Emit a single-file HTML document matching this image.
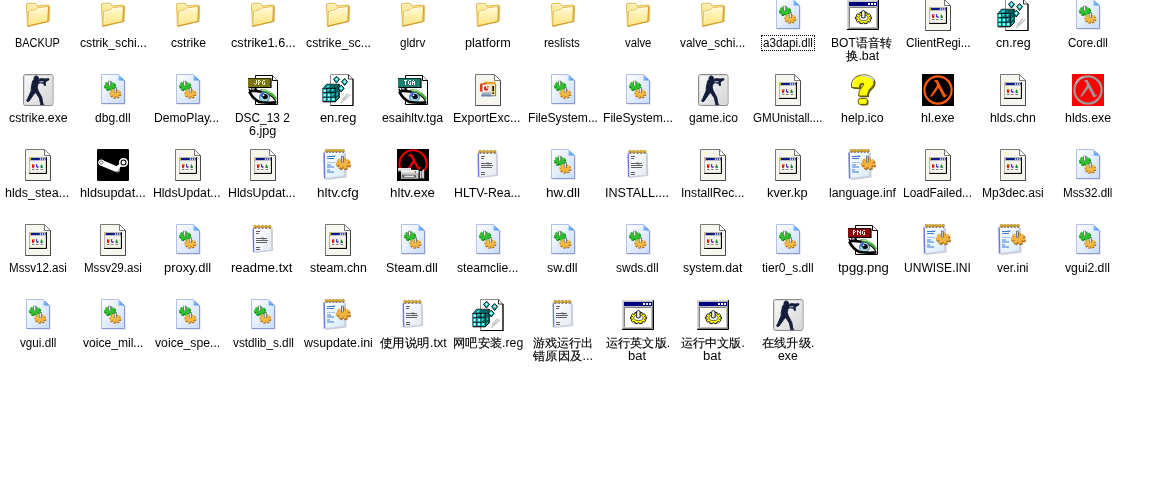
<!DOCTYPE html>
<html><head><meta charset="utf-8"><style>
html,body{margin:0;padding:0;background:#fff;width:1156px;height:488px;overflow:hidden;position:relative}
.i{position:absolute;width:32px;height:32px}
.t{position:absolute;transform-origin:0 0;font-family:"Liberation Sans",sans-serif;font-size:12px;line-height:13px;color:#000;white-space:nowrap;filter:grayscale(1) contrast(1.6)}
.cj{-webkit-text-stroke:.15px #000}
.f{position:absolute;border:1px dotted #000;box-sizing:border-box}
</style></head><body>
<svg width="0" height="0" style="position:absolute"><defs>
<linearGradient id="fg1" x1="0" y1="0" x2="0" y2="1"><stop offset="0" stop-color="#FFFAD8"/><stop offset="1" stop-color="#FFE47E"/></linearGradient>
<linearGradient id="dg1" x1="0" y1="0" x2="1" y2="1"><stop offset="0" stop-color="#FFFFFF"/><stop offset="1" stop-color="#C8DCFA"/></linearGradient>
<linearGradient id="dg2" x1="0" y1="0" x2="1" y2="1"><stop offset="0" stop-color="#A8D0FF"/><stop offset="1" stop-color="#3A8AEA"/></linearGradient>
<linearGradient id="csg" x1="0" y1="0" x2="1" y2="1"><stop offset="0" stop-color="#FAFAFA"/><stop offset="1" stop-color="#D4D4D4"/></linearGradient>
<linearGradient id="npg" x1="0" y1="0" x2="1" y2="1"><stop offset="0" stop-color="#FFFFFF"/><stop offset="1" stop-color="#D8ECFA"/></linearGradient>
<linearGradient id="npg2" x1="0" y1="0" x2="1" y2="1"><stop offset="0" stop-color="#FFFFFF"/><stop offset="1" stop-color="#E4EAF2"/></linearGradient>
</defs><symbol id="fo" viewBox="0 0 32 32">
<path d="M6.5,28 L5.5,6.5 Q5.5,5 7,5 L13.5,5 L16,7.5 L27.5,6.5 L28.5,8 L28,23 Z" fill="#8A8A8A" opacity=".22"/>
<path d="M5.5,27.5 L4.5,6 Q4.5,4.5 6,4.5 L12,4.2 Q13.5,4.2 14.5,6 L15,7 L26.5,6 L27.5,7.5 L27,22 Z" fill="#FCEBA0" stroke="#E0B440" stroke-width=".9"/>
<path d="M6,6 L12,5.6 L13.8,8" fill="none" stroke="#FFFBE8" stroke-width=".8"/>
<path d="M6.5,12.5 L13.5,10.8 L15.5,9 L26.5,7.5 L26,22.5 L6,27 Z" fill="url(#fg1)" stroke="#E2B040" stroke-width=".9"/>
<path d="M7.5,13.2 L13.8,11.6 L15.8,9.9 L25.5,8.6" fill="none" stroke="#FFFDF0" stroke-width=".9"/>
<path d="M7.4,13.5 L7.1,25.6" stroke="#FFFBE0" stroke-width=".8" opacity=".8"/>
<path d="M6,27 L26,22.5 L26.5,7.5" fill="none" stroke="#D09A28" stroke-width=".9"/>
</symbol>
<symbol id="dl" viewBox="0 0 32 32">
<path d="M5.5,1.5 H22.5 L28.5,7.5 V30.5 H5.5Z" fill="#7880A8" opacity=".35"/>
<path d="M4.5,0.5 H21.5 L27.5,6.5 V29.5 H4.5Z" fill="url(#dg1)" stroke="#B0C0EA"/>
<path d="M27.5,6.5 V29.5 H4.5" fill="none" stroke="#8C9AD0"/>
<path d="M21.5,0.5 V6.5 H27.5Z" fill="url(#dg2)"/>
<path d="M17.70,12.84 L19.67,13.29 L18.61,15.50 L16.73,14.83 L16.04,15.33 L16.80,16.84 L13.88,17.59 L13.34,16.00 L12.39,15.91 L11.37,17.34 L8.79,16.07 L10.00,14.76 L9.50,14.15 L7.47,14.43 L7.17,12.09 L9.22,12.05 L9.55,11.37 L8.04,10.28 L10.24,8.65 L11.59,9.90 L12.50,9.67 L12.64,8.04 L15.69,8.33 L15.32,9.94 L16.13,10.33 L17.81,9.38 L19.42,11.38 L17.60,12.13Z" fill="#0A7A0E"/>
<path d="M17.10,11.84 L19.07,12.27 L18.03,14.39 L16.15,13.70 L15.47,14.17 L16.25,15.67 L13.37,16.39 L12.84,14.80 L11.91,14.72 L10.91,16.16 L8.36,14.93 L9.58,13.64 L9.09,13.07 L7.07,13.36 L6.77,11.12 L8.82,11.09 L9.14,10.46 L7.62,9.39 L9.79,7.82 L11.13,9.08 L12.02,8.87 L12.15,7.23 L15.16,7.52 L14.77,9.11 L15.56,9.48 L17.24,8.52 L18.82,10.44 L17.01,11.17Z" fill="#30C030"/>
<path d="M22.58,19.91 L24.50,20.13 L23.99,22.06 L22.11,21.66 L21.66,22.16 L22.81,23.40 L20.67,24.49 L19.68,23.15 L18.89,23.27 L18.60,24.80 L16.08,24.41 L16.55,22.91 L15.89,22.57 L14.33,23.50 L12.90,21.86 L14.57,21.08 L14.42,20.49 L12.50,20.27 L13.01,18.34 L14.89,18.74 L15.34,18.24 L14.19,17.00 L16.33,15.91 L17.32,17.25 L18.11,17.13 L18.40,15.60 L20.92,15.99 L20.45,17.49 L21.11,17.83 L22.67,16.90 L24.10,18.54 L22.43,19.32Z" fill="#A86810"/>
<path d="M22.18,19.02 L24.10,19.23 L23.59,21.12 L21.71,20.71 L21.26,21.20 L22.41,22.43 L20.27,23.50 L19.28,22.15 L18.49,22.27 L18.20,23.80 L15.68,23.42 L16.15,21.92 L15.49,21.60 L13.93,22.53 L12.50,20.92 L14.17,20.15 L14.02,19.58 L12.10,19.37 L12.61,17.48 L14.49,17.89 L14.94,17.40 L13.79,16.17 L15.93,15.10 L16.92,16.45 L17.71,16.33 L18.00,14.80 L20.52,15.18 L20.05,16.68 L20.71,17.00 L22.27,16.07 L23.70,17.68 L22.03,18.45Z" fill="#F2B842"/>
<rect x="11.2" y="6.8" width="2.9" height="5" fill="#606060"/><rect x="11.9" y="7.2" width="1.4" height="4.4" fill="#F4F4F4"/>
<rect x="17" y="13.8" width="2.7" height="5" fill="#606060"/><rect x="17.6" y="14.2" width="1.3" height="4.4" fill="#F4F4F4"/>
</symbol>
<symbol id="bt" viewBox="0 0 32 32">
<rect x="0" y="1" width="32" height="29" fill="#C0C0C0"/>
<path d="M0.5,29.5 V1.5 H31" fill="none" stroke="#D8D8D8"/>
<path d="M31.5,1 V30.5 H0" fill="none" stroke="#000"/>
<path d="M30.5,2 V29.5 H1" fill="none" stroke="#808080"/>
<rect x="2" y="3" width="28" height="4" fill="#000080"/>
<rect x="21" y="4" width="2" height="2" fill="#fff"/><rect x="24" y="4" width="2" height="2" fill="#fff"/><rect x="27" y="4" width="2" height="2" fill="#fff"/>
<rect x="3" y="9" width="26" height="19" fill="#fff"/>
<path d="M2.5,28 V8.5 H29" fill="none" stroke="#808080"/>
<path d="M23.14,17.96 L24.60,18.08 L24.60,19.92 L23.14,20.04 L22.74,20.90 L23.81,21.68 L22.30,23.17 L21.00,22.59 L19.96,23.11 L20.22,24.26 L17.78,24.83 L17.14,23.76 L15.86,23.76 L15.22,24.83 L12.78,24.26 L13.04,23.11 L12.00,22.59 L10.70,23.17 L9.19,21.68 L10.26,20.90 L9.86,20.04 L8.40,19.92 L8.40,18.08 L9.86,17.96 L10.26,17.10 L9.19,16.32 L10.70,14.83 L12.00,15.41 L13.04,14.89 L12.78,13.74 L15.22,13.17 L15.86,14.24 L17.14,14.24 L17.78,13.17 L20.22,13.74 L19.96,14.89 L21.00,15.41 L22.30,14.83 L23.81,16.32 L22.74,17.10Z" fill="#FFFF00" stroke="#000" stroke-width=".9"/>
<ellipse cx="16.5" cy="18.8" rx="4.6" ry="2.7" fill="#fff" stroke="#000" stroke-width=".6"/>
<path d="M14.6,18.5 V12.5 Q16.4,10.6 18.2,12.5 V18.5 Q16.4,19.6 14.6,18.5Z" fill="#C8C8C8" stroke="#000" stroke-width=".8"/>
<rect x="15.6" y="12.5" width="1.3" height="5.5" fill="#fff"/>
</symbol>
<symbol id="ap" viewBox="0 0 32 32">
<path d="M3.5,0.5 H22.5 L28.5,6.5 V31.5 H3.5Z" fill="#F6F6EE" stroke="#787878"/>
<path d="M28.5,6.5 V31.5 H3.5" fill="none" stroke="#4A4A4A"/>
<path d="M22.5,0.5 V6.5 H28.5Z" fill="#FFFFFF" stroke="#787878"/>
<rect x="7.5" y="8.5" width="16.5" height="15.5" fill="#ECEADC" stroke="#B8B8B0"/>
<rect x="8.6" y="12" width="14.6" height="11.2" fill="#F4F4EA"/>
<path d="M24.5,8.2 V24.5 H7.2" fill="none" stroke="#000" stroke-width="1"/>
<rect x="8" y="9" width="16" height="2.2" fill="#0A1A8A"/>
<rect x="8" y="9" width="1" height="2.2" fill="#F0A000"/>
<circle cx="18.5" cy="10" r=".85" fill="#fff"/><circle cx="20.6" cy="10" r=".85" fill="#fff"/><circle cx="22.7" cy="10" r=".85" fill="#fff"/>
<path d="M10,16 Q11,14.5 12.5,15.5 L12.2,18 L11,19.5 L10,18Z" fill="#E00000"/><rect x="11" y="15.5" width="1" height="1" fill="#FFD000"/>
<path d="M14,15 L15.5,15.5 L14.8,17 L16.5,17.5 L16,19 L14,18Z" fill="#1040F0"/><rect x="15" y="17.5" width="1.5" height="1" fill="#C000C0"/>
<path d="M18.5,19 L18.5,17 L19.5,15 L20.5,17 L21,19Z" fill="#10A010"/><rect x="19" y="17.5" width="1.2" height="1" fill="#2050F0"/>
<rect x="10" y="20" width="2.5" height="1" fill="#808080"/><rect x="14" y="20" width="2.5" height="1" fill="#808080"/><rect x="18.5" y="20" width="2.5" height="1" fill="#808080"/>
</symbol>
<symbol id="rg" viewBox="0 0 32 32">
<path d="M8.5,0.5 H26.5 L31,5 V31.5 H8.5Z" fill="#fff" stroke="#909090"/>
<path d="M31,5 V31.5 H8.5" fill="none" stroke="#000" stroke-width="1.2"/>
<path d="M26.5,0.5 V5 H31" fill="none" stroke="#000" stroke-width=".8"/>
<path d="M20,26 L26,19.5 M22.5,26 L28,20.5 M19,29 L24,24" stroke="#C4C4C4" stroke-width="1.3"/>
<path d="M0.8,14.6 L4.6,10.2 L17.4,10.2 L13.2,14.6Z" fill="#00A8A8" stroke="#000" stroke-width=".7"/>
<path d="M13.2,14.6 L17.4,10.2 L17.4,23.2 L13.2,27.6Z" fill="#006464" stroke="#000" stroke-width=".7"/>
<path d="M5.2,11 L8.6,11 L7,13.8 L3.6,13.8Z" fill="#30E8E8" stroke="#000" stroke-width=".4"/>
<path d="M9.4,11 L12.6,11 L11,13.8 L7.8,13.8Z M13.4,11 L16.6,11 L14.6,13.8 L11.8,13.8Z" fill="#008080" stroke="#000" stroke-width=".4"/>
<path d="M14,24 L16.6,21.2 L16.6,24.6 L14,27Z M14,19.5 L16.6,16.7 L16.6,20.4 L14,23Z" fill="#10B8B8" stroke="#000" stroke-width=".4"/>
<rect x="0.80" y="14.60" width="4.13" height="4.13" fill="#00DCDC" stroke="#000" stroke-width=".55"/><circle cx="2.87" cy="16.66" r="1" fill="#E8FFFF"/><rect x="0.80" y="18.93" width="4.13" height="4.13" fill="#00DCDC" stroke="#000" stroke-width=".55"/><circle cx="2.87" cy="21.00" r="1" fill="#E8FFFF"/><rect x="0.80" y="23.26" width="4.13" height="4.13" fill="#00DCDC" stroke="#000" stroke-width=".55"/><circle cx="2.87" cy="25.32" r="1" fill="#E8FFFF"/><rect x="4.93" y="14.60" width="4.13" height="4.33" fill="#006C6C" stroke="#000" stroke-width=".55"/><path d="M5.43,15.10 h3 l-3,3z" fill="#30E0E0"/><rect x="4.93" y="18.93" width="4.13" height="4.13" fill="#00DCDC" stroke="#000" stroke-width=".55"/><circle cx="6.99" cy="21.00" r="1" fill="#E8FFFF"/><rect x="4.93" y="23.26" width="4.13" height="4.13" fill="#00DCDC" stroke="#000" stroke-width=".55"/><circle cx="6.99" cy="25.32" r="1" fill="#E8FFFF"/><rect x="9.06" y="14.60" width="4.13" height="4.33" fill="#006C6C" stroke="#000" stroke-width=".55"/><path d="M9.56,15.10 h3 l-3,3z" fill="#30E0E0"/><rect x="9.06" y="18.93" width="4.13" height="4.33" fill="#006C6C" stroke="#000" stroke-width=".55"/><path d="M9.56,19.43 h3 l-3,3z" fill="#30E0E0"/><rect x="9.06" y="23.26" width="4.13" height="4.13" fill="#00DCDC" stroke="#000" stroke-width=".55"/><circle cx="11.12" cy="25.32" r="1" fill="#E8FFFF"/><path d="M0.8,27.8 H13.2 L17.4,23.4" stroke="#000" stroke-width="1" fill="none"/><path d="M14.5,2.3 L17.5,5.3 L14.5,9.1 L11.5,5.3Z" fill="#007C7C" stroke="#000" stroke-width=".9"/><path d="M14.5,2.9 L16.7,5.3 L14.5,7.9 L12.3,5.3Z" fill="#10D8D8"/><circle cx="14.5" cy="5.3" r="1" fill="#fff"/><path d="M22.6,4.6 L25.6,7.6 L22.6,11.4 L19.6,7.6Z" fill="#007C7C" stroke="#000" stroke-width=".9"/><path d="M22.6,5.2 L24.8,7.6 L22.6,10.2 L20.4,7.6Z" fill="#10D8D8"/><circle cx="22.6" cy="7.6" r="1" fill="#fff"/><path d="M19.2,11.2 L22.2,14.2 L19.2,18.0 L16.2,14.2Z" fill="#007C7C" stroke="#000" stroke-width=".9"/><path d="M19.2,11.8 L21.4,14.2 L19.2,16.8 L17.0,14.2Z" fill="#10D8D8"/><circle cx="19.2" cy="14.2" r="1" fill="#fff"/></symbol>
<symbol id="cs" viewBox="0 0 32 32">
<rect x="1.5" y="0.5" width="29.5" height="31" rx="2" fill="url(#csg)" stroke="#8C8C8C"/>
<rect x="2.5" y="1.5" width="27.5" height="29" rx="1.5" fill="none" stroke="#DCDCDC"/>
<path d="M12.2,5.8 C11,6 10.4,7 10.4,8 L9.2,13.8 L9.2,16.8 L5.8,24.5 L4.6,26.6 L5.2,27.6 L6.8,27.4 L11.6,20.6 L13.8,18.6 L17.4,24.2 L18.6,29.6 L18.4,30.6 L21.8,30.6 L20.8,29.2 L19.8,23.4 L16.2,16.6 L15.2,13.2 L16.2,9.6 L18.2,8.8 L21.6,9.4 L22.4,11.6 L23.6,11.4 L23.2,9 L24,7.4 L26.9,5.9 L27,4.7 L22.6,4.9 L19.6,4.5 L16.6,5.4 C16.8,3.6 16,1.9 14.2,1.9 C12.4,1.9 11.6,3.8 12.2,5.8Z" fill="#131C3A" stroke="#131C3A" stroke-width=".9" stroke-linejoin="round"/>
<path d="M17.2,7.4 L21.4,7.2 L21.6,8.2 L17.6,8.3Z" fill="#E8E8E8"/>
</symbol>
<symbol id="jp" viewBox="0 0 32 32">
<path d="M8.5,1.5 H25.5 L30.5,6.5 V30.5 H8.5Z" fill="#fff" stroke="#000"/>
<path d="M25.5,1.5 V6.5 H30.5" fill="#fff" stroke="#000"/>
<rect x="1" y="4" width="23" height="9.5" fill="#7A7410"/>
<path d="M1.5,13.5 H24 V4.5" stroke="#000" stroke-width="1.2" fill="none"/>
<path d="M1,4.5 H24" stroke="#000" stroke-width=".6"/>
<path d="M9,6h1v1h-1zM9,7h1v1h-1zM9,8h1v1h-1zM7,9h1v1h-1zM9,9h1v1h-1zM8,10h1v1h-1zM11,6h1v1h-1zM12,6h1v1h-1zM11,7h1v1h-1zM13,7h1v1h-1zM11,8h1v1h-1zM12,8h1v1h-1zM11,9h1v1h-1zM11,10h1v1h-1zM16,6h1v1h-1zM17,6h1v1h-1zM15,7h1v1h-1zM15,8h1v1h-1zM17,8h1v1h-1zM15,9h1v1h-1zM17,9h1v1h-1zM16,10h1v1h-1zM17,10h1v1h-1z" fill="#F0ECC0"/>
<path d="M2.5,17.5 Q9,17 14,17.4 Q23,19 28.8,27.2 Q20,28.4 12.5,27.6 Q6,24.5 2.5,17.5Z" fill="#F4F4F4"/>
<path d="M13.6,16.4 Q23,15.8 29,25.6" fill="none" stroke="#48B038" stroke-width="2.8"/>
<path d="M14,16 Q20,15.6 24,18.6" fill="none" stroke="#C8ECC0" stroke-width="1"/>
<path d="M14,17.8 Q23,18.8 28.6,27" fill="none" stroke="#000" stroke-width="1.1"/>
<circle cx="17.5" cy="23.2" r="5" fill="#9ADCF0" stroke="#000" stroke-width=".5"/>
<path d="M12.6,22.6 A5,5 0 0 1 17,18.2 L17.5,23.2Z" fill="#3A70E0"/>
<circle cx="18.1" cy="22.6" r="2.7" fill="#000"/>
<circle cx="16.6" cy="21.3" r=".9" fill="#fff"/>
<path d="M2,17.2 Q8,16.6 14.4,17.8" fill="none" stroke="#000" stroke-width="2.4"/>
<path d="M2.8,16.4 L1.8,14.6 M5,16.2 L4.6,14.2 M7.2,16 L7.2,14.2 M9.4,16 L9.8,14.4" stroke="#000" stroke-width="1.2"/>
<path d="M2.2,17.6 Q6,25 12.4,28 Q20,29.2 29.4,28.4" fill="none" stroke="#000" stroke-width="2.6"/>
</symbol>
<symbol id="tg" viewBox="0 0 32 32">
<path d="M8.5,1.5 H25.5 L30.5,6.5 V30.5 H8.5Z" fill="#fff" stroke="#000"/>
<path d="M25.5,1.5 V6.5 H30.5" fill="#fff" stroke="#000"/>
<rect x="1" y="4" width="23" height="9.5" fill="#1A8070"/>
<path d="M1.5,13.5 H24 V4.5" stroke="#000" stroke-width="1.2" fill="none"/>
<path d="M1,4.5 H24" stroke="#000" stroke-width=".6"/>
<path d="M7,6h1v1h-1zM8,6h1v1h-1zM9,6h1v1h-1zM8,7h1v1h-1zM8,8h1v1h-1zM8,9h1v1h-1zM8,10h1v1h-1zM12,6h1v1h-1zM13,6h1v1h-1zM11,7h1v1h-1zM11,8h1v1h-1zM13,8h1v1h-1zM11,9h1v1h-1zM13,9h1v1h-1zM12,10h1v1h-1zM13,10h1v1h-1zM16,6h1v1h-1zM15,7h1v1h-1zM17,7h1v1h-1zM15,8h1v1h-1zM16,8h1v1h-1zM17,8h1v1h-1zM15,9h1v1h-1zM17,9h1v1h-1zM15,10h1v1h-1zM17,10h1v1h-1z" fill="#F0FFF8"/>
<path d="M2.5,17.5 Q9,17 14,17.4 Q23,19 28.8,27.2 Q20,28.4 12.5,27.6 Q6,24.5 2.5,17.5Z" fill="#F4F4F4"/>
<path d="M13.6,16.4 Q23,15.8 29,25.6" fill="none" stroke="#48B038" stroke-width="2.8"/>
<path d="M14,16 Q20,15.6 24,18.6" fill="none" stroke="#C8ECC0" stroke-width="1"/>
<path d="M14,17.8 Q23,18.8 28.6,27" fill="none" stroke="#000" stroke-width="1.1"/>
<circle cx="17.5" cy="23.2" r="5" fill="#9ADCF0" stroke="#000" stroke-width=".5"/>
<path d="M12.6,22.6 A5,5 0 0 1 17,18.2 L17.5,23.2Z" fill="#3A70E0"/>
<circle cx="18.1" cy="22.6" r="2.7" fill="#000"/>
<circle cx="16.6" cy="21.3" r=".9" fill="#fff"/>
<path d="M2,17.2 Q8,16.6 14.4,17.8" fill="none" stroke="#000" stroke-width="2.4"/>
<path d="M2.8,16.4 L1.8,14.6 M5,16.2 L4.6,14.2 M7.2,16 L7.2,14.2 M9.4,16 L9.8,14.4" stroke="#000" stroke-width="1.2"/>
<path d="M2.2,17.6 Q6,25 12.4,28 Q20,29.2 29.4,28.4" fill="none" stroke="#000" stroke-width="2.6"/>
</symbol>
<symbol id="pn" viewBox="0 0 32 32">
<path d="M8.5,1.5 H25.5 L30.5,6.5 V30.5 H8.5Z" fill="#fff" stroke="#000"/>
<path d="M25.5,1.5 V6.5 H30.5" fill="#fff" stroke="#000"/>
<rect x="1" y="4" width="23" height="9.5" fill="#8A0A0A"/>
<path d="M1.5,13.5 H24 V4.5" stroke="#000" stroke-width="1.2" fill="none"/>
<path d="M1,4.5 H24" stroke="#000" stroke-width=".6"/>
<path d="M6,6h1v1h-1zM7,6h1v1h-1zM6,7h1v1h-1zM8,7h1v1h-1zM6,8h1v1h-1zM7,8h1v1h-1zM6,9h1v1h-1zM6,10h1v1h-1zM10,6h1v1h-1zM13,6h1v1h-1zM10,7h1v1h-1zM11,7h1v1h-1zM13,7h1v1h-1zM10,8h1v1h-1zM12,8h1v1h-1zM13,8h1v1h-1zM10,9h1v1h-1zM13,9h1v1h-1zM10,10h1v1h-1zM13,10h1v1h-1zM16,6h1v1h-1zM17,6h1v1h-1zM15,7h1v1h-1zM15,8h1v1h-1zM17,8h1v1h-1zM15,9h1v1h-1zM17,9h1v1h-1zM16,10h1v1h-1zM17,10h1v1h-1z" fill="#FFE8E8"/>
<path d="M2.5,17.5 Q9,17 14,17.4 Q23,19 28.8,27.2 Q20,28.4 12.5,27.6 Q6,24.5 2.5,17.5Z" fill="#F4F4F4"/>
<path d="M13.6,16.4 Q23,15.8 29,25.6" fill="none" stroke="#48B038" stroke-width="2.8"/>
<path d="M14,16 Q20,15.6 24,18.6" fill="none" stroke="#C8ECC0" stroke-width="1"/>
<path d="M14,17.8 Q23,18.8 28.6,27" fill="none" stroke="#000" stroke-width="1.1"/>
<circle cx="17.5" cy="23.2" r="5" fill="#9ADCF0" stroke="#000" stroke-width=".5"/>
<path d="M12.6,22.6 A5,5 0 0 1 17,18.2 L17.5,23.2Z" fill="#3A70E0"/>
<circle cx="18.1" cy="22.6" r="2.7" fill="#000"/>
<circle cx="16.6" cy="21.3" r=".9" fill="#fff"/>
<path d="M2,17.2 Q8,16.6 14.4,17.8" fill="none" stroke="#000" stroke-width="2.4"/>
<path d="M2.8,16.4 L1.8,14.6 M5,16.2 L4.6,14.2 M7.2,16 L7.2,14.2 M9.4,16 L9.8,14.4" stroke="#000" stroke-width="1.2"/>
<path d="M2.2,17.6 Q6,25 12.4,28 Q20,29.2 29.4,28.4" fill="none" stroke="#000" stroke-width="2.6"/>
</symbol>
<symbol id="pp" viewBox="0 0 32 32">
<path d="M3.5,0.5 H22.5 L28.5,6.5 V31.5 H3.5Z" fill="#F6F6EE" stroke="#787878"/>
<path d="M28.5,6.5 V31.5 H3.5" fill="none" stroke="#4A4A4A"/>
<path d="M22.5,0.5 V6.5 H28.5Z" fill="#FFFFFF" stroke="#787878"/>
<path d="M9,21.8 L10.5,18.6 H19.5 V22.6 H9Z" fill="#6E88AC"/>
<path d="M10.5,19.4 H19 V20.2 H10.2Z" fill="#D4E0EC"/>
<rect x="12" y="7.8" width="11.6" height="2.2" fill="#F09A28"/>
<rect x="18.8" y="9.8" width="4.8" height="12" fill="#F2D890"/>
<path d="M23.6,9.8 V21.8 H18.8" fill="none" stroke="#4A6A9A" stroke-width=".8"/>
<rect x="20.4" y="12" width="1.5" height="5.2" fill="#000"/><rect x="20.4" y="18.4" width="1.5" height="1.5" fill="#000"/>
<rect x="8" y="9.2" width="6.5" height="8.6" rx="1.6" fill="#E03C1C"/>
<rect x="10.6" y="10.8" width="7.2" height="7.2" fill="#FFFFFF" stroke="#F0B8B0" stroke-width=".5"/>
<path d="M14.2,14.4 V12.1 A2.3,2.3 0 1 0 16.5,14.4Z" fill="#D82818"/>
<path d="M15,13.6 V11.6 A2.2,2.2 0 0 1 17.2,13.6Z" fill="#E86040"/>
</symbol>
<symbol id="hp" viewBox="0 0 32 32">
<path d="M4.5,13.5 Q4,6 9,3 Q13,0.5 18,0.8 Q25,1.5 27,6 Q28,11 23.5,14.5 Q20.5,17 20.5,22 L11.5,22 Q11.5,16 15,13 Q17.5,11 16.5,9.5 Q14,9 13,10.5 L12.5,14 Z" fill="#6E6400" transform="translate(1.4,1.2)"/>
<path d="M4.5,13.5 Q4,6 9,3 Q13,0.5 18,0.8 Q25,1.5 27,6 Q28,11 23.5,14.5 Q20.5,17 20.5,22 L11.5,22 Q11.5,16 15,13 Q17.5,11 16.5,9.5 Q14,9 13,10.5 L12.5,14 Z" fill="#FFFF00" stroke="#4A4400" stroke-width=".9"/>
<path d="M14,2.2 Q20,1 24,3.5 Q26,5 26.2,7" stroke="#D4D4D4" stroke-width="1.8" fill="none"/>
<path d="M5.5,12.5 Q5.5,6.5 9,4" stroke="#FFFFC8" stroke-width="1" fill="none"/>
<rect x="12.5" y="25.5" width="9" height="6" rx="2" fill="#6E6400"/>
<rect x="11.3" y="24.4" width="9" height="6" rx="2" fill="#FFFF00" stroke="#4A4400" stroke-width=".9"/>
</symbol>
<symbol id="hl" viewBox="0 0 32 32">
<rect width="32" height="32" fill="#000"/>
<circle cx="16" cy="16" r="13.6" fill="none" stroke="#FF5A0A" stroke-width="2.2"/>
<path d="M12.5,6 H15.5 L23.5,21 L25,20.5 L24.5,22 L22.5,23.5 L21,22.5 L16.5,14 L10,22.5 L8,22.5 L15,11.5 L14,8 L12.5,8Z" fill="#FF5A0A"/>
</symbol>
<symbol id="hd" viewBox="0 0 32 32">
<rect width="32" height="32" fill="#FF0000"/>
<circle cx="16" cy="16" r="13.6" fill="none" stroke="#9A9A9A" stroke-width="2.2"/>
<path d="M12.5,6 H15.5 L23.5,21 L25,20.5 L24.5,22 L22.5,23.5 L21,22.5 L16.5,14 L10,22.5 L8,22.5 L15,11.5 L14,8 L12.5,8Z" fill="#9A9A9A"/>
<path d="M3.5,9 Q6,4 11,2.5" stroke="#E0E0E0" stroke-width="1" fill="none"/>
</symbol>
<symbol id="st" viewBox="0 0 32 32">
<rect width="32" height="32" rx="1.2" fill="#000"/>
<path d="M4.5,10.8 L20.6,17.4 L19.6,23.2 L3.4,16.4 Z" fill="#fff"/>
<circle cx="4.3" cy="13.6" r="3.1" fill="#fff"/>
<circle cx="4.3" cy="13.6" r="1.7" fill="none" stroke="#000" stroke-width=".5"/>
<circle cx="20.2" cy="20.4" r="2.8" fill="#fff"/>
<path d="M18.3,22.2 A1.9,1.9 0 0 0 21.6,19" fill="none" stroke="#000" stroke-width=".6"/>
<path d="M19.5,19.2 L25,14.8" stroke="#fff" stroke-width="3.2"/>
<circle cx="26.5" cy="13.5" r="3.8" fill="#000" stroke="#fff" stroke-width="1.6"/>
<circle cx="26.5" cy="13.5" r="1.9" fill="#fff"/>
</symbol>
<symbol id="cf" viewBox="0 0 32 32">
<path d="M4,31 L24.5,28.5 L24,4 L3.5,5 Z" fill="#505878" opacity=".3"/>
<path d="M2.5,29.5 L22.5,27 L22,2.5 L2,3.5 Z" fill="url(#npg)" stroke="#C8D0E8" stroke-width=".7"/>
<path d="M2.6,29.5 L2.1,3.5" stroke="#7078D8" stroke-width="1.5"/>
<path d="M5,7.5 H9 M9,7.5 H13" stroke="#3A7AD8" stroke-width="1"/><path d="M10,6.5 H14" stroke="#A8C8F0" stroke-width=".8"/>
<path d="M5,9.5 H12" stroke="#3A7AD8" stroke-width="1"/>
<path d="M5,13.5 H13" stroke="#A8C8F0" stroke-width="1"/>
<path d="M5,16 H9 M5,18 H12" stroke="#3A7AD8" stroke-width="1"/>
<path d="M5,21 H8 M5,23 H12" stroke="#3A7AD8" stroke-width="1"/>
<ellipse cx="4.5" cy="1.8" rx="1.5" ry="1.6" fill="#E8B020" stroke="#8A6A10" stroke-width=".5"/><rect x="4.3" y="2.4" width=".9" height="1.6" fill="#6060A0"/><ellipse cx="7.8" cy="1.8" rx="1.5" ry="1.6" fill="#E8B020" stroke="#8A6A10" stroke-width=".5"/><rect x="7.6" y="2.4" width=".9" height="1.6" fill="#6060A0"/><ellipse cx="11.1" cy="1.8" rx="1.5" ry="1.6" fill="#E8B020" stroke="#8A6A10" stroke-width=".5"/><rect x="10.9" y="2.4" width=".9" height="1.6" fill="#6060A0"/><ellipse cx="14.4" cy="1.8" rx="1.5" ry="1.6" fill="#E8B020" stroke="#8A6A10" stroke-width=".5"/><rect x="14.2" y="2.4" width=".9" height="1.6" fill="#6060A0"/><ellipse cx="17.7" cy="1.8" rx="1.5" ry="1.6" fill="#E8B020" stroke="#8A6A10" stroke-width=".5"/><rect x="17.5" y="2.4" width=".9" height="1.6" fill="#6060A0"/><ellipse cx="21.0" cy="1.8" rx="1.5" ry="1.6" fill="#E8B020" stroke="#8A6A10" stroke-width=".5"/><rect x="20.8" y="2.4" width=".9" height="1.6" fill="#6060A0"/>
<path d="M26.80,15.46 L29.19,15.91 L28.12,18.62 L25.82,17.91 L25.06,18.54 L26.10,20.32 L22.73,21.35 L21.98,19.48 L20.87,19.41 L19.77,21.18 L16.64,19.76 L18.01,18.13 L17.38,17.41 L14.97,17.84 L14.44,15.03 L16.89,14.88 L17.22,14.05 L15.31,12.81 L17.77,10.73 L19.47,12.17 L20.51,11.85 L20.54,9.88 L24.14,10.10 L23.80,12.04 L24.77,12.48 L26.71,11.26 L28.75,13.61 L26.63,14.60Z" fill="#8A5008" opacity=".9"/>
<path d="M26.00,14.27 L28.39,14.70 L27.35,17.31 L25.06,16.59 L24.33,17.19 L25.38,18.96 L22.11,19.96 L21.38,18.08 L20.30,18.02 L19.23,19.79 L16.18,18.42 L17.56,16.80 L16.95,16.12 L14.56,16.56 L14.03,13.85 L16.48,13.71 L16.80,12.93 L14.89,11.71 L17.28,9.70 L18.96,11.15 L19.96,10.84 L19.97,8.88 L23.48,9.09 L23.12,11.03 L24.05,11.44 L25.98,10.21 L27.96,12.48 L25.84,13.45Z" fill="#F2B440"/>
<path d="M26.00,14.27 L28.39,14.70 L27.35,17.31 L25.06,16.59 L24.33,17.19 L25.38,18.96 L22.11,19.96 L21.38,18.08 L20.30,18.02 L19.23,19.79 L16.18,18.42 L17.56,16.80 L16.95,16.12 L14.56,16.56 L14.03,13.85 L16.48,13.71 L16.80,12.93 L14.89,11.71 L17.28,9.70 L18.96,11.15 L19.96,10.84 L19.97,8.88 L23.48,9.09 L23.12,11.03 L24.05,11.44 L25.98,10.21 L27.96,12.48 L25.84,13.45Z" fill="none" stroke="#D89020" stroke-width=".5"/>
<rect x="19" y="6.8" width="2.6" height="6.5" fill="#404858"/><rect x="19.7" y="7.2" width="1.1" height="5.8" fill="#E0E4F0"/>
</symbol>
<symbol id="tx" viewBox="0 0 32 32">
<path d="M7.6,29 L26.2,27 L25.8,4.5 L7.2,5.2 Z" fill="#505878" opacity=".3"/>
<path d="M6.5,28 L24.6,26 L24.2,3.2 L6.2,4.2 Z" fill="url(#npg2)" stroke="#C8CCE0" stroke-width=".7"/>
<path d="M6.6,28 L6.3,4.2" stroke="#7078D8" stroke-width="1.4"/>
<path d="M9,7.5 H13 M9,9.5 H12 M9,14.5 H20 M9,16.5 H21 M9,18.5 H20 M9,23.5 H13 M9,25.5 H13" stroke="#606060" stroke-width="1"/>
<path d="M14,13.5 H17 M15,15.5 H18" stroke="#B0B0B0" stroke-width=".8"/>
<ellipse cx="8.2" cy="2.8" rx="1.5" ry="1.6" fill="#E8B020" stroke="#8A6A10" stroke-width=".5"/><rect x="8.0" y="3.4" width=".9" height="1.6" fill="#6060A0"/><ellipse cx="11.8" cy="2.8" rx="1.5" ry="1.6" fill="#E8B020" stroke="#8A6A10" stroke-width=".5"/><rect x="11.6" y="3.4" width=".9" height="1.6" fill="#6060A0"/><ellipse cx="15.4" cy="2.8" rx="1.5" ry="1.6" fill="#E8B020" stroke="#8A6A10" stroke-width=".5"/><rect x="15.2" y="3.4" width=".9" height="1.6" fill="#6060A0"/><ellipse cx="19.0" cy="2.8" rx="1.5" ry="1.6" fill="#E8B020" stroke="#8A6A10" stroke-width=".5"/><rect x="18.8" y="3.4" width=".9" height="1.6" fill="#6060A0"/><ellipse cx="22.6" cy="2.8" rx="1.5" ry="1.6" fill="#E8B020" stroke="#8A6A10" stroke-width=".5"/><rect x="22.4" y="3.4" width=".9" height="1.6" fill="#6060A0"/></symbol>
<symbol id="tv" viewBox="0 0 32 32">
<rect width="32" height="32" fill="#000"/>
<path d="M3.4,19.9 A13.6,13.6 0 1 1 27.8,21.6" fill="none" stroke="#F00000" stroke-width="2.1"/>
<path d="M11.6,6.4 H14.4 L21.2,19.2 H23.6" fill="none" stroke="#F00000" stroke-width="2.3"/><path d="M17,11.6 L11.8,19.6" fill="none" stroke="#F00000" stroke-width="2.2"/>
<rect x="1" y="19" width="13" height="3.2" fill="#E4E4E4"/>
<rect x="1" y="21.6" width="13" height=".8" fill="#707070"/>
<rect x="4" y="20.8" width="17.5" height="9" fill="#C4C4C4"/>
<rect x="4" y="21.2" width="17.5" height="2.4" fill="#F2F2F2"/>
<rect x="5.6" y="26.2" width="13" height="2" fill="#fff" stroke="#303030" stroke-width=".6"/>
<rect x="6.2" y="26.6" width="1" height="1.2" fill="#000"/><rect x="17.2" y="26.6" width="1" height="1.2" fill="#000"/>
<rect x="22.8" y="22" width="1.8" height="7.5" fill="#D8D8D8"/>
<path d="M25,21.8 L27.2,19.8 V30.2 L25,28.4Z" fill="#D0D0D0"/>
<rect x="17.8" y="22.2" width="1" height="1.6" fill="#F00000"/>
</symbol>
</svg>

<svg class="i" style="left:22px;top:-1px"><use href="#fo"/></svg>
<div class="t" style="left:14.69px;top:37px;transform:scaleX(0.9083)">BACKUP</div>
<svg class="i" style="left:97px;top:-1px"><use href="#fo"/></svg>
<div class="t" style="left:79.80px;top:37px;transform:scaleX(1.0123)">cstrik_schi...</div>
<svg class="i" style="left:172px;top:-1px"><use href="#fo"/></svg>
<div class="t" style="left:170.70px;top:37px;transform:scaleX(1.0088)">cstrike</div>
<svg class="i" style="left:247px;top:-1px"><use href="#fo"/></svg>
<div class="t" style="left:230.80px;top:37px;transform:scaleX(1.0550)">cstrike1.6...</div>
<svg class="i" style="left:322px;top:-1px"><use href="#fo"/></svg>
<div class="t" style="left:305.80px;top:37px;transform:scaleX(1.0258)">cstrike_sc...</div>
<svg class="i" style="left:397px;top:-1px"><use href="#fo"/></svg>
<div class="t" style="left:399.60px;top:37px;transform:scaleX(0.9731)">gldrv</div>
<svg class="i" style="left:472px;top:-1px"><use href="#fo"/></svg>
<div class="t" style="left:464.55px;top:37px;transform:scaleX(1.0548)">platform</div>
<svg class="i" style="left:547px;top:-1px"><use href="#fo"/></svg>
<div class="t" style="left:544.44px;top:37px;transform:scaleX(0.9611)">reslists</div>
<svg class="i" style="left:622px;top:-1px"><use href="#fo"/></svg>
<div class="t" style="left:624.60px;top:37px;transform:scaleX(0.9393)">valve</div>
<svg class="i" style="left:697px;top:-1px"><use href="#fo"/></svg>
<div class="t" style="left:679.90px;top:37px;transform:scaleX(0.9877)">valve_schi...</div>
<svg class="i" style="left:772px;top:-1px"><use href="#dl"/></svg>
<div class="t" style="left:762.60px;top:37px;transform:scaleX(0.9725)">a3dapi.dll</div>
<svg class="i" style="left:847px;top:-1px"><use href="#bt"/></svg>
<div class="t" style="left:831.29px;top:37px;transform:scaleX(1.0051)">BOT<span class="cj">语音转</span></div>
<div class="t" style="left:845.90px;top:50px;transform:scaleX(1.0344)"><span class="cj">换</span>.bat</div>
<svg class="i" style="left:922px;top:-1px"><use href="#ap"/></svg>
<div class="t" style="left:905.80px;top:37px;transform:scaleX(0.9891)">ClientRegi...</div>
<svg class="i" style="left:997px;top:-1px"><use href="#rg"/></svg>
<div class="t" style="left:995.80px;top:37px;transform:scaleX(1.0364)">cn.reg</div>
<svg class="i" style="left:1072px;top:-1px"><use href="#dl"/></svg>
<div class="t" style="left:1067.80px;top:37px;transform:scaleX(0.9634)">Core.dll</div>
<svg class="i" style="left:22px;top:74px"><use href="#cs"/></svg>
<div class="t" style="left:8.80px;top:112px;transform:scaleX(1.0228)">cstrike.exe</div>
<svg class="i" style="left:97px;top:74px"><use href="#dl"/></svg>
<div class="t" style="left:94.80px;top:112px;transform:scaleX(1.0057)">dbg.dll</div>
<svg class="i" style="left:172px;top:74px"><use href="#dl"/></svg>
<div class="t" style="left:153.69px;top:112px;transform:scaleX(1.0111)">DemoPlay...</div>
<svg class="i" style="left:247px;top:74px"><use href="#jp"/></svg>
<div class="t" style="left:234.71px;top:112px;transform:scaleX(0.9907)">DSC_13 2</div>
<div class="t" style="left:248.70px;top:125px;transform:scaleX(1.0520)">6.jpg</div>
<svg class="i" style="left:322px;top:74px"><use href="#rg"/></svg>
<div class="t" style="left:319.80px;top:112px;transform:scaleX(1.0667)">en.reg</div>
<svg class="i" style="left:397px;top:74px"><use href="#tg"/></svg>
<div class="t" style="left:381.70px;top:112px;transform:scaleX(1.0217)">esaihltv.tga</div>
<svg class="i" style="left:472px;top:74px"><use href="#pp"/></svg>
<div class="t" style="left:452.86px;top:112px;transform:scaleX(1.0413)">ExportExc...</div>
<svg class="i" style="left:547px;top:74px"><use href="#dl"/></svg>
<div class="t" style="left:527.79px;top:112px;transform:scaleX(1.0090)">FileSystem...</div>
<svg class="i" style="left:622px;top:74px"><use href="#dl"/></svg>
<div class="t" style="left:602.79px;top:112px;transform:scaleX(1.0075)">FileSystem...</div>
<svg class="i" style="left:697px;top:74px"><use href="#cs"/></svg>
<div class="t" style="left:689.00px;top:112px;transform:scaleX(1.0062)">game.ico</div>
<svg class="i" style="left:772px;top:74px"><use href="#ap"/></svg>
<div class="t" style="left:752.90px;top:112px;transform:scaleX(0.9648)">GMUnistall....</div>
<svg class="i" style="left:847px;top:74px"><use href="#hp"/></svg>
<div class="t" style="left:840.97px;top:112px;transform:scaleX(1.0325)">help.ico</div>
<svg class="i" style="left:922px;top:74px"><use href="#hl"/></svg>
<div class="t" style="left:920.76px;top:112px;transform:scaleX(1.0419)">hl.exe</div>
<svg class="i" style="left:997px;top:74px"><use href="#ap"/></svg>
<div class="t" style="left:989.88px;top:112px;transform:scaleX(1.0233)">hlds.chn</div>
<svg class="i" style="left:1072px;top:74px"><use href="#hd"/></svg>
<div class="t" style="left:1064.77px;top:112px;transform:scaleX(1.0326)">hlds.exe</div>
<svg class="i" style="left:22px;top:149px"><use href="#ap"/></svg>
<div class="t" style="left:4.75px;top:187px;transform:scaleX(1.0458)">hlds_stea...</div>
<svg class="i" style="left:97px;top:149px"><use href="#st"/></svg>
<div class="t" style="left:79.74px;top:187px;transform:scaleX(1.0600)">hldsupdat...</div>
<svg class="i" style="left:172px;top:149px"><use href="#ap"/></svg>
<div class="t" style="left:152.78px;top:187px;transform:scaleX(1.0234)">HldsUpdat...</div>
<svg class="i" style="left:247px;top:149px"><use href="#ap"/></svg>
<div class="t" style="left:227.88px;top:187px;transform:scaleX(1.0250)">HldsUpdat...</div>
<svg class="i" style="left:322px;top:149px"><use href="#cf"/></svg>
<div class="t" style="left:316.68px;top:187px;transform:scaleX(1.1250)">hltv.cfg</div>
<svg class="i" style="left:397px;top:149px"><use href="#tv"/></svg>
<div class="t" style="left:389.69px;top:187px;transform:scaleX(1.1128)">hltv.exe</div>
<svg class="i" style="left:472px;top:149px"><use href="#tx"/></svg>
<div class="t" style="left:453.87px;top:187px;transform:scaleX(1.0254)">HLTV-Rea...</div>
<svg class="i" style="left:547px;top:149px"><use href="#dl"/></svg>
<div class="t" style="left:545.56px;top:187px;transform:scaleX(1.1357)">hw.dll</div>
<svg class="i" style="left:622px;top:149px"><use href="#tx"/></svg>
<div class="t" style="left:604.65px;top:187px;transform:scaleX(1.0458)">INSTALL....</div>
<svg class="i" style="left:697px;top:149px"><use href="#ap"/></svg>
<div class="t" style="left:680.79px;top:187px;transform:scaleX(1.0115)">InstallRec...</div>
<svg class="i" style="left:772px;top:149px"><use href="#ap"/></svg>
<div class="t" style="left:766.73px;top:187px;transform:scaleX(1.0676)">kver.kp</div>
<svg class="i" style="left:847px;top:149px"><use href="#cf"/></svg>
<div class="t" style="left:828.68px;top:187px;transform:scaleX(1.0246)">language.inf</div>
<svg class="i" style="left:922px;top:149px"><use href="#ap"/></svg>
<div class="t" style="left:902.91px;top:187px;transform:scaleX(0.9940)">LoadFailed...</div>
<svg class="i" style="left:997px;top:149px"><use href="#ap"/></svg>
<div class="t" style="left:981.69px;top:187px;transform:scaleX(1.0067)">Mp3dec.asi</div>
<svg class="i" style="left:1072px;top:149px"><use href="#dl"/></svg>
<div class="t" style="left:1062.53px;top:187px;transform:scaleX(0.9735)">Mss32.dll</div>
<svg class="i" style="left:22px;top:224px"><use href="#ap"/></svg>
<div class="t" style="left:8.74px;top:262px;transform:scaleX(0.9638)">Mssv12.asi</div>
<svg class="i" style="left:97px;top:224px"><use href="#ap"/></svg>
<div class="t" style="left:83.74px;top:262px;transform:scaleX(0.9621)">Mssv29.asi</div>
<svg class="i" style="left:172px;top:224px"><use href="#dl"/></svg>
<div class="t" style="left:164.32px;top:262px;transform:scaleX(1.0762)">proxy.dll</div>
<svg class="i" style="left:247px;top:224px"><use href="#tx"/></svg>
<div class="t" style="left:231.32px;top:262px;transform:scaleX(1.0839)">readme.txt</div>
<svg class="i" style="left:322px;top:224px"><use href="#ap"/></svg>
<div class="t" style="left:309.70px;top:262px;transform:scaleX(1.0255)">steam.chn</div>
<svg class="i" style="left:397px;top:224px"><use href="#dl"/></svg>
<div class="t" style="left:386.47px;top:262px;transform:scaleX(1.0333)">Steam.dll</div>
<svg class="i" style="left:472px;top:224px"><use href="#dl"/></svg>
<div class="t" style="left:456.80px;top:262px;transform:scaleX(1.0117)">steamclie...</div>
<svg class="i" style="left:547px;top:224px"><use href="#dl"/></svg>
<div class="t" style="left:547.30px;top:262px;transform:scaleX(1.0414)">sw.dll</div>
<svg class="i" style="left:622px;top:224px"><use href="#dl"/></svg>
<div class="t" style="left:616.40px;top:262px;transform:scaleX(0.9976)">swds.dll</div>
<svg class="i" style="left:697px;top:224px"><use href="#ap"/></svg>
<div class="t" style="left:682.80px;top:262px;transform:scaleX(1.0224)">system.dat</div>
<svg class="i" style="left:772px;top:224px"><use href="#dl"/></svg>
<div class="t" style="left:762.00px;top:262px;transform:scaleX(1.0039)">tier0_s.dll</div>
<svg class="i" style="left:847px;top:224px"><use href="#pn"/></svg>
<div class="t" style="left:838.10px;top:262px;transform:scaleX(1.0870)">tpgg.png</div>
<svg class="i" style="left:922px;top:224px"><use href="#cf"/></svg>
<div class="t" style="left:903.90px;top:262px;transform:scaleX(1.0031)">UNWISE.INI</div>
<svg class="i" style="left:997px;top:224px"><use href="#cf"/></svg>
<div class="t" style="left:997.30px;top:262px;transform:scaleX(1.0065)">ver.ini</div>
<svg class="i" style="left:1072px;top:224px"><use href="#dl"/></svg>
<div class="t" style="left:1065.40px;top:262px;transform:scaleX(1.0186)">vgui2.dll</div>
<svg class="i" style="left:22px;top:299px"><use href="#dl"/></svg>
<div class="t" style="left:20.40px;top:337px;transform:scaleX(0.9730)">vgui.dll</div>
<svg class="i" style="left:97px;top:299px"><use href="#dl"/></svg>
<div class="t" style="left:83.10px;top:337px;transform:scaleX(1.0068)">voice_mil...</div>
<svg class="i" style="left:172px;top:299px"><use href="#dl"/></svg>
<div class="t" style="left:155.10px;top:337px;transform:scaleX(1.0190)">voice_spe...</div>
<svg class="i" style="left:247px;top:299px"><use href="#dl"/></svg>
<div class="t" style="left:233.20px;top:337px;transform:scaleX(0.9820)">vstdlib_s.dll</div>
<svg class="i" style="left:322px;top:299px"><use href="#cf"/></svg>
<div class="t" style="left:304.20px;top:337px;transform:scaleX(1.0318)">wsupdate.ini</div>
<svg class="i" style="left:397px;top:299px"><use href="#tx"/></svg>
<div class="t" style="left:379.70px;top:337px;transform:scaleX(1.0406)"><span class="cj">使用说明</span>.txt</div>
<svg class="i" style="left:472px;top:299px"><use href="#rg"/></svg>
<div class="t" style="left:452.88px;top:337px;transform:scaleX(1.0224)"><span class="cj">网吧安装</span>.reg</div>
<svg class="i" style="left:547px;top:299px"><use href="#tx"/></svg>
<div class="t" style="left:532.70px;top:337px;transform:scaleX(1.0069)"><span class="cj">游戏运行出</span></div>
<div class="t" style="left:532.70px;top:350px;transform:scaleX(1.0316)"><span class="cj">错原因及</span>...</div>
<svg class="i" style="left:622px;top:299px"><use href="#bt"/></svg>
<div class="t" style="left:605.80px;top:337px;transform:scaleX(1.0113)"><span class="cj">运行英文版</span>.</div>
<div class="t" style="left:627.72px;top:350px;transform:scaleX(1.0813)">bat</div>
<svg class="i" style="left:697px;top:299px"><use href="#bt"/></svg>
<div class="t" style="left:680.80px;top:337px;transform:scaleX(1.0097)"><span class="cj">运行中文版</span>.</div>
<div class="t" style="left:702.61px;top:350px;transform:scaleX(1.0875)">bat</div>
<svg class="i" style="left:772px;top:299px"><use href="#cs"/></svg>
<div class="t" style="left:761.50px;top:337px;transform:scaleX(1.0200)"><span class="cj">在线升级</span>.</div>
<div class="t" style="left:778.10px;top:350px;transform:scaleX(1.0211)">exe</div>
<div class="f" style="left:761px;top:35px;width:54px;height:16px"></div>
</body></html>
